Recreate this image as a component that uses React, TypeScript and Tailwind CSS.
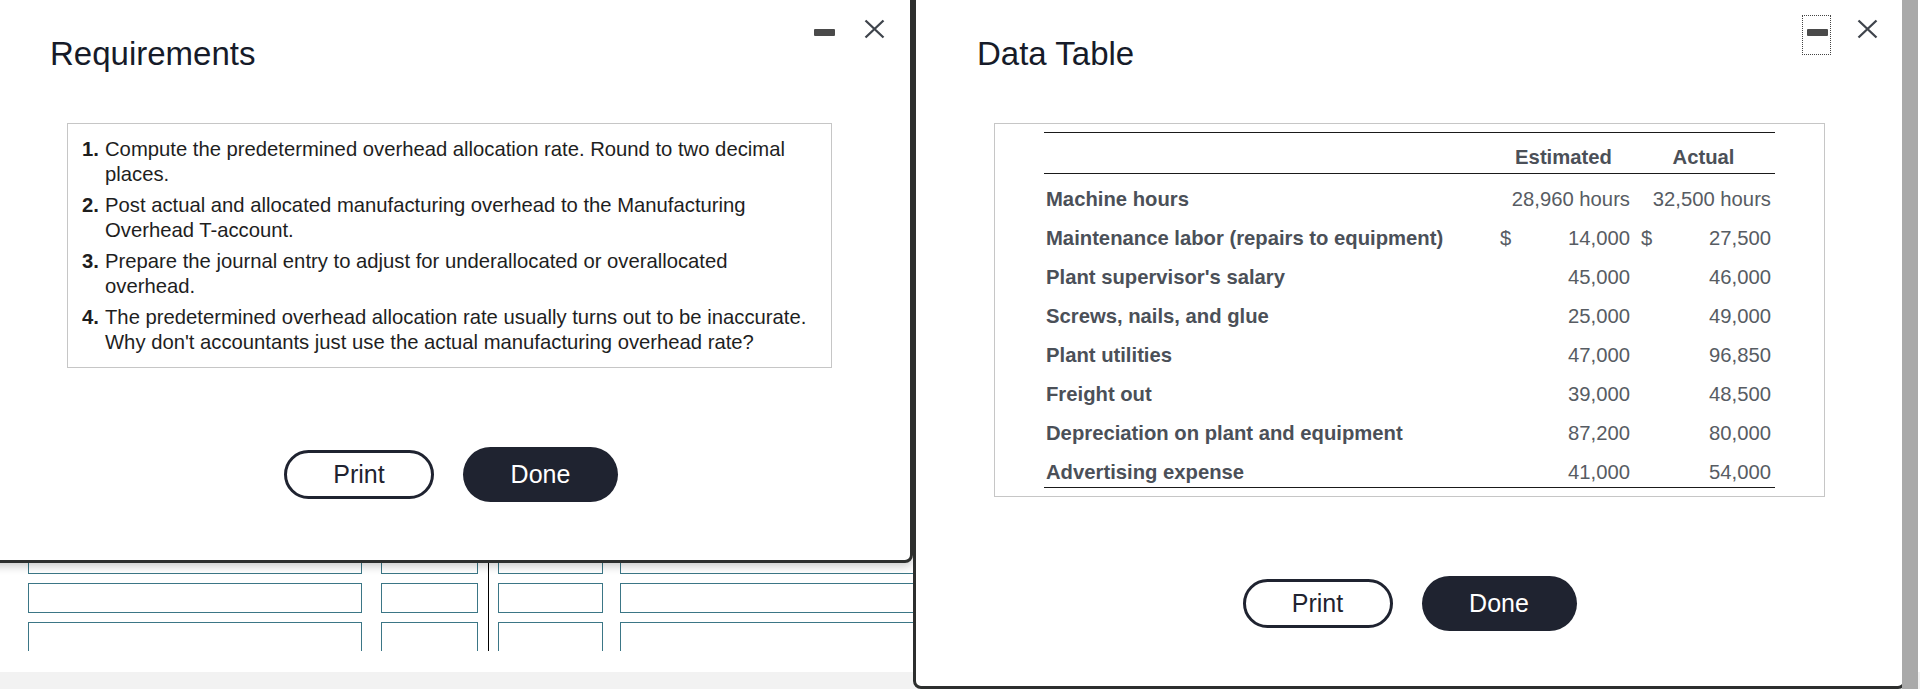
import React from "react";

const Box = ({ w }: { w: string }) => (
  <div className={`${w} h-[30px] shrink-0 border border-[#3b7686] bg-white`} />
);

const XIcon = () => (
  <svg width="21" height="20" viewBox="0 0 21 20" className="mt-[4px] shrink-0">
    <path d="M1.5 1.5 L19.5 18.5 M19.5 1.5 L1.5 18.5" stroke="#3f444c" strokeWidth="2.3" strokeLinecap="butt" fill="none" />
  </svg>
);

const Header = ({ title, focused }: { title: string; focused?: boolean }) => (
  <div className="flex items-start justify-between pl-[61px] pr-[25px]">
    <h2 className="mt-[41px] text-[33px] leading-[40px] font-normal text-[#161b29]">{title}</h2>
    <div className="mt-[22px] flex items-start gap-[26px]">
      <div
        className={`w-[29px] h-[40px] pt-[13px] pl-[4px] flex justify-start ${
          focused ? "border border-dotted border-[#444]" : "border border-transparent"
        }`}
      >
        <span className="block w-[21px] h-[7px] rounded-[1px] bg-[#4a4a4a]" />
      </div>
      <XIcon />
    </div>
  </div>
);

const Buttons = ({ shift }: { shift?: boolean }) => (
  <div className={`mt-[79px] flex items-center justify-center gap-[29px] ${shift ? "pl-[3px]" : ""}`}>
    <button className="w-[150px] h-[49px] rounded-full border-[3px] border-[#1f2330] bg-white text-[25px] leading-none text-[#1f2330]">
      Print
    </button>
    <button className="w-[155px] h-[55px] rounded-full bg-[#1f2330] text-[25px] leading-none text-white">
      Done
    </button>
  </div>
);

const reqs = [
  "Compute the predetermined overhead allocation rate. Round to two decimal places.",
  "Post actual and allocated manufacturing overhead to the Manufacturing Overhead T-account.",
  "Prepare the journal entry to adjust for underallocated or overallocated overhead.",
  "The predetermined overhead allocation rate usually turns out to be inaccurate. Why don't accountants just use the actual manufacturing overhead rate?",
];

const data: [string, string, string, boolean][] = [
  ["Maintenance labor (repairs to equipment)", "14,000", "27,500", true],
  ["Plant supervisor's salary", "45,000", "46,000", false],
  ["Screws, nails, and glue", "25,000", "49,000", false],
  ["Plant utilities", "47,000", "96,850", false],
  ["Freight out", "39,000", "48,500", false],
  ["Depreciation on plant and equipment", "87,200", "80,000", false],
  ["Advertising expense", "41,000", "54,000", false],
];

const grid = "grid grid-cols-[453px_19px_120px_20px_119px] whitespace-nowrap";

export default function App() {
  return (
    <div className="relative w-[1920px] h-[689px] overflow-hidden bg-white font-['Liberation_Sans',Arial,sans-serif]">
      {/* background page */}
      <div className="h-[651px] overflow-hidden flex pt-[544px] pl-[28px]">
        <div className="flex flex-col gap-[9px]">
          {[0, 1, 2].map((i) => (
            <div key={i} className="flex gap-[19px]">
              <Box w="w-[334px]" />
              <Box w="w-[97px]" />
            </div>
          ))}
        </div>
        <div className="w-px bg-black ml-[10px] mr-[9px]" />
        <div className="flex flex-col gap-[9px]">
          {[0, 1, 2].map((i) => (
            <div key={i} className="flex gap-[17px]">
              <Box w="w-[105px]" />
              <Box w="w-[400px]" />
            </div>
          ))}
        </div>
      </div>
      <div className="h-[21px] bg-white" />
      <div className="h-[17px] bg-[#f2f2f2]" />

      {/* Requirements dialog */}
      <div className="absolute left-[-14px] top-[-10px] w-[927px] h-[573px] border-[3px] border-[#2d2f2e] rounded-b-[8px] bg-white shadow-[0_3px_10px_rgba(0,0,0,0.22)]">
        <Header title="Requirements" />
        <div className="mx-[78px] mt-[49px] border border-[#c6c6c6] pl-[14px] pr-[16px] pt-[13px] pb-[12px]">
          <ol className="text-[20.25px] leading-[25px] text-[#1e1e1e]">
            {reqs.map((r, i) => (
              <li key={i} className={`flex ${i > 0 ? "mt-[6px]" : ""}`}>
                <span className="w-[23px] shrink-0 font-bold">{i + 1}.</span>
                <span className="w-[710px]">{r}</span>
              </li>
            ))}
          </ol>
        </div>
        <Buttons shift />
      </div>

      {/* Data Table dialog */}
      <div className="absolute left-[913px] top-[-10px] w-[993px] h-[699px] border-[3px] border-[#2d2f2e] rounded-b-[8px] bg-white">
        <Header title="Data Table" focused />
        <div className="mx-[78px] mt-[49px] border border-[#c6c6c6] px-[49px] pt-[8px] pb-[8px]">
          <div className="text-[20.25px] text-[#575c63]">
            <div className={`${grid} border-t border-b border-[#1a1a1a] h-[42px] pt-[8px] leading-[32px] font-bold text-[#4b5058]`}>
              <div />
              <div className="col-span-2 text-center pr-[6px]">Estimated</div>
              <div className="col-span-2 text-center pr-[4px]">Actual</div>
            </div>
            <div className="pt-[6px] border-b border-[#1a1a1a]">
              <div className={`${grid} h-[39px] leading-[39px]`}>
                <div className="pl-[2px] font-bold text-[#4b5058]">Machine hours</div>
                <div className="col-span-2 text-right pr-[6px]">28,960 hours</div>
                <div className="col-span-2 text-right pr-[4px]">32,500 hours</div>
              </div>
              {data.map(([label, est, act, dollar], i) => (
                <div
                  key={label}
                  className={`${grid} ${i === data.length - 1 ? "h-[34px]" : "h-[39px]"} leading-[39px]`}
                >
                  <div className="pl-[2px] font-bold text-[#4b5058]">{label}</div>
                  <div className="pl-[3px]">{dollar ? "$" : ""}</div>
                  <div className="text-right pr-[6px]">{est}</div>
                  <div className="pl-[5px]">{dollar ? "$" : ""}</div>
                  <div className="text-right pr-[4px]">{act}</div>
                </div>
              ))}
            </div>
          </div>
        </div>
        <Buttons />
      </div>

      {/* scrollbar */}
      <div className="absolute top-0 right-[2px] w-[16px] h-full bg-[#a9a9a9]" />
    </div>
  );
}
